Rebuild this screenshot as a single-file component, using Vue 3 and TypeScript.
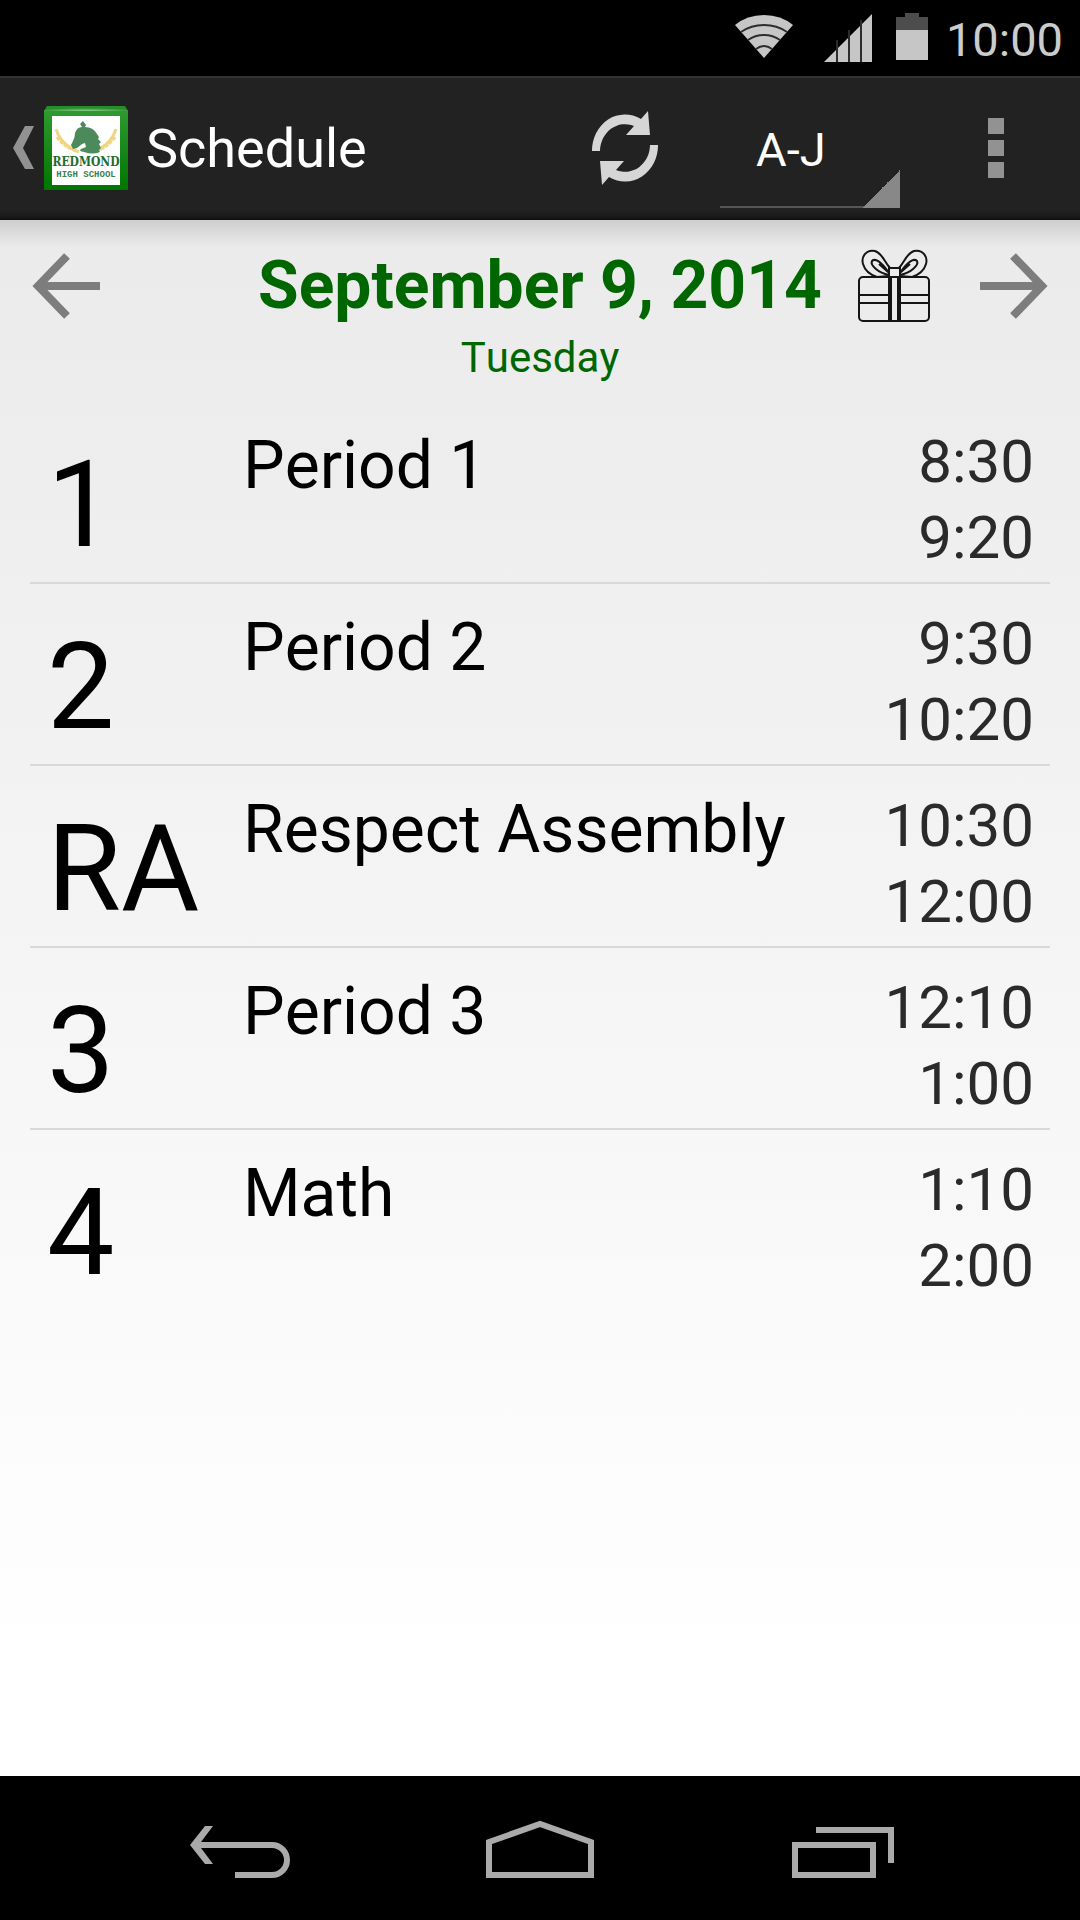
<script setup lang="ts">
import { ref } from 'vue'

interface Period {
  mark: string
  name: string
  start: string
  end: string
}

const periods: Period[] = [
  { mark: '1', name: 'Period 1', start: '8:30', end: '9:20' },
  { mark: '2', name: 'Period 2', start: '9:30', end: '10:20' },
  { mark: 'RA', name: 'Respect Assembly', start: '10:30', end: '12:00' },
  { mark: '3', name: 'Period 3', start: '12:10', end: '1:00' },
  { mark: '4', name: 'Math', start: '1:10', end: '2:00' },
]

const group = ref('A-J')
</script>

<template>
  <div class="screen">
    <div class="status">
      <svg class="wifi" width="58" height="76" viewBox="0 0 58 76" aria-hidden="true">
        <path d="M0 25Q12 15 29 15T58 25L29 58Z" fill="#c6c6c6" />
        <g fill="none" stroke="#2c2c2c" stroke-width="2">
          <path d="M6 32Q16 25 29 25T52 32" />
          <path d="M13 40Q20 35 29 35T45 40" />
          <path d="M21 49Q25 46 29 46T37 49" />
        </g>
      </svg>
      <svg class="signal" width="48" height="76" viewBox="0 0 48 76" aria-hidden="true">
        <path d="M0 62L48 14V62Z" fill="#c6c6c6" />
        <path d="M13 40V62M25 30V62M37 20V62" stroke="#2c2c2c" stroke-width="2" />
      </svg>
      <svg class="battery" width="32" height="76" viewBox="0 0 32 76" aria-hidden="true">
        <path d="M9 13H23V17H32V30H0V17H9Z" fill="#4d4d4d" />
        <path d="M0 30H32V60H0Z" fill="#c6c6c6" />
      </svg>
      <time class="clock">10:00</time>
    </div>

    <header class="bar">
      <button class="up" type="button" aria-label="Navigate up">
        <svg width="22" height="44" viewBox="0 0 22 44" aria-hidden="true">
          <path d="M12 0H21L10 22L21 43H12L0 22Z" fill="#929292" />
        </svg>
        <svg class="logo" width="86" height="86" viewBox="0 0 86 86" aria-hidden="true">
          <defs>
            <linearGradient id="frame" x1="0" y1="0" x2="0" y2="1">
              <stop offset="0" stop-color="#2f9a30" />
              <stop offset="1" stop-color="#007500" />
            </linearGradient>
            <radialGradient id="shine" cx=".5" cy="1" r=".6">
              <stop offset="0" stop-color="#93cf93" />
              <stop offset="1" stop-color="#248f26" />
            </radialGradient>
          </defs>
          <path d="M1 5H85V85H1Z" fill="url(#frame)" />
          <path d="M4 1H82L85 6H1Z" fill="url(#shine)" />
          <path d="M9 11H77V80H9Z" fill="#fff" />
          <g fill="none" stroke="#f1d583" stroke-width="3">
            <path d="M13 24Q18 40 36 47" />
            <path d="M14 32Q22 43 34 46" stroke-dasharray="4 1" />
            <path d="M73 24Q68 40 50 47" />
            <path d="M72 32Q64 43 53 46" stroke-dasharray="4 1" />
          </g>
          <path
            d="M37 19L40 16L43 20L42 22Q50 22 54 29L56 32L55 34L58 37L56 39L58 43L56 45L57 47Q50 50 41 47Q35 46 38 44L43 42L42 38L39 39L34 43L30 44L28 40Q32 33 32 28Q34 22 39 22Z"
            fill="#4c8a5c"
          />
          <text x="43" y="61" class="logo-name">REDMOND</text>
          <text x="43" y="72" class="logo-sub">HIGH SCHOOL</text>
        </svg>
      </button>
      <h1 class="title">Schedule</h1>
      <button class="refresh" type="button" aria-label="Refresh">
        <svg width="66" height="74" viewBox="0 0 66 74" aria-hidden="true">
          <g fill="#d6d6d6">
            <path d="M0 40A33 36 0 0 1 49 8L56 0L58 24H34L42 15A25 27 0 0 0 8 40Z" />
            <path
              d="M0 40A33 36 0 0 1 49 8L56 0L58 24H34L42 15A25 27 0 0 0 8 40Z"
              transform="rotate(180 33 37)"
            />
          </g>
        </svg>
      </button>
      <select v-model="group" class="group" aria-label="Last name group">
        <option>A-J</option>
        <option>K-Z</option>
      </select>
      <button class="more" type="button" aria-label="More options">
        <svg width="16" height="60" viewBox="0 0 16 60" aria-hidden="true">
          <path d="M0 0H16V16H0ZM0 22H16V38H0ZM0 44H16V60H0Z" fill="#929292" />
        </svg>
      </button>
    </header>

    <main class="content">
      <div class="day">
        <button class="step" type="button" aria-label="Previous day">
          <svg width="68" height="66" viewBox="0 0 68 66" aria-hidden="true">
            <path d="M68 33H6M35 3L6 33L35 63" fill="none" stroke="#7d7d7d" stroke-width="8" />
          </svg>
        </button>
        <h2 class="date">September 9, 2014</h2>
        <div class="after">
          <svg width="74" height="74" viewBox="0 0 74 74" aria-label="Special day" role="img">
            <g fill="none" stroke="#151515" stroke-width="2">
              <rect x="2" y="28" width="70" height="44" rx="4" />
              <path d="M32 28V72M34 28V72M41 28V72M43 28V72M2 46H33M2 54H33M42 46H72M42 54H72" />
              <path d="M32 19H43V28H32Z" />
              <path d="M33 19C27 12 25 4 18 2C9 0 4 8 6 15C8 22 14 26 20 28L32 27" />
              <path d="M42 19C48 12 50 4 57 2C66 0 71 8 69 15C67 22 61 26 55 28L43 27" />
              <path d="M32 24C24 12 18 9 15 12C13 16 21 24 32 26M31 23L22 15" />
              <path d="M43 24C51 12 57 9 60 12C62 16 54 24 43 26M44 23L53 15" />
            </g>
          </svg>
          <button class="step" type="button" aria-label="Next day">
            <svg width="68" height="66" viewBox="0 0 68 66" aria-hidden="true">
              <path d="M0 33H62M33 3L62 33L33 63" fill="none" stroke="#7d7d7d" stroke-width="8" />
            </svg>
          </button>
        </div>
      </div>
      <p class="weekday">Tuesday</p>

      <ol class="periods">
        <li v-for="p in periods" :key="p.mark" class="period">
          <span class="mark">{{ p.mark }}</span>
          <span class="name">{{ p.name }}</span>
          <span class="times">
            <time>{{ p.start }}</time>
            <time>{{ p.end }}</time>
          </span>
        </li>
      </ol>
    </main>

    <nav class="keys" aria-label="System">
      <button type="button" aria-label="Back">
        <svg width="108" height="58" viewBox="0 0 108 58" aria-hidden="true">
          <path d="M15 25H86A15 15 0 0 1 86 55H49" fill="none" stroke="#aaa" stroke-width="6" />
          <path d="M19 6H27L15 22V28L27 44H19L4 25Z" fill="#aaa" />
        </svg>
      </button>
      <button type="button" aria-label="Home">
        <svg width="108" height="58" viewBox="0 0 108 58" aria-hidden="true">
          <path d="M3 22L54 4L105 22V55H3Z" fill="none" stroke="#aaa" stroke-width="6" />
        </svg>
      </button>
      <button type="button" aria-label="Recent apps">
        <svg width="108" height="58" viewBox="0 0 108 58" aria-hidden="true">
          <path
            d="M9 25H87V55H9ZM30 10H105V43"
            fill="none"
            stroke="#aaa"
            stroke-width="6"
          />
        </svg>
      </button>
    </nav>
  </div>
</template>

<style>
body {
  margin: 0;
  background: #000;
}
</style>

<style scoped>
.screen {
  display: flex;
  flex-direction: column;
  min-height: 100vh;
  font-family: Roboto, 'Noto Sans', sans-serif;
  font-kerning: none;
  color: #000;
}

svg {
  display: block;
  flex: none;
}

button {
  display: flex;
  align-items: center;
  justify-content: center;
  margin: 0;
  padding: 0;
  border: 0;
  background: none;
}

.status {
  display: flex;
  align-items: center;
  justify-content: flex-end;
  height: 76px;
  padding-right: 17px;
  background: #000;
}

.signal {
  margin-left: 31px;
}

.battery {
  margin: 0 18px 0 24px;
}

.clock {
  padding-top: 4px;
  font-size: 47px;
  line-height: 56px;
  color: #ccc;
}

.bar {
  display: flex;
  align-items: center;
  box-sizing: border-box;
  height: 144px;
  border-top: 2px solid #333;
  border-bottom: 2px solid #111;
  background: linear-gradient(#222 94%, #181818);
}

.up {
  gap: 8px;
  padding-left: 13px;
}

.logo-name {
  font: bold 12px 'DejaVu Serif Condensed', 'DejaVu Serif', serif;
  fill: #1d6b2c;
  text-anchor: middle;
}

.logo-sub {
  font: bold 9px 'Liberation Mono', monospace;
  fill: #3c8150;
  text-anchor: middle;
}

.title {
  flex: 1;
  margin: 0 0 0 17px;
  padding-top: 2px;
  font-size: 54px;
  font-weight: 400;
  line-height: 64px;
  color: #fff;
}

.refresh {
  margin-right: 62px;
}

.group {
  appearance: none;
  align-self: flex-end;
  width: 180px;
  height: 104px;
  margin: 0 0 10px;
  padding: 0 36px 12px;
  border: 0;
  border-radius: 0;
  background:
    linear-gradient(135deg, transparent 50%, #888 50%) right bottom / 38px 38px no-repeat,
    linear-gradient(#555, #555) left bottom / 100% 2px no-repeat;
  font-family: inherit;
  font-size: 47px;
  line-height: 56px;
  color: #fff;
}

.more {
  width: 16px;
  margin: 0 76px 0 88px;
}

.content {
  flex: 1;
  padding: 27px 30px;
  background:
    linear-gradient(rgba(0, 0, 0, 0.12), transparent) top / 100% 28px no-repeat,
    linear-gradient(#ebebeb, #ececec 120px, #fff 1450px);
}

.day {
  display: grid;
  grid-template-columns: 1fr auto 1fr;
  align-items: center;
  padding: 0 2px;
}

.step {
  justify-self: start;
}

.date {
  margin: 0;
  font-size: 66px;
  font-weight: 700;
  line-height: 78px;
  color: #060;
}

.after {
  display: flex;
  align-items: center;
  justify-content: space-between;
  padding-left: 35px;
}

.weekday {
  margin: 8px 0 19px;
  font-size: 42px;
  line-height: 50px;
  text-align: center;
  color: #060;
}

.periods {
  margin: 0;
  padding: 0;
  list-style: none;
}

.period {
  display: grid;
  grid-template-columns: 196px 1fr auto;
  box-sizing: border-box;
  height: 182px;
  padding: 0 16px 0 17px;
  border-bottom: 2px solid #d9d9d9;
}

.period:last-child {
  border-bottom: 0;
}

.mark {
  padding-top: 33px;
  font-size: 120px;
  line-height: 140px;
}

.name {
  padding-top: 25px;
  font-size: 66px;
  line-height: 78px;
}

.times {
  display: flex;
  flex-direction: column;
  padding-top: 22px;
  font-size: 60px;
  line-height: 76px;
  text-align: right;
  color: #2a2a2a;
}

.keys {
  display: flex;
  justify-content: center;
  gap: 192px;
  box-sizing: border-box;
  height: 144px;
  padding-top: 2px;
  background: #000;
}
</style>
